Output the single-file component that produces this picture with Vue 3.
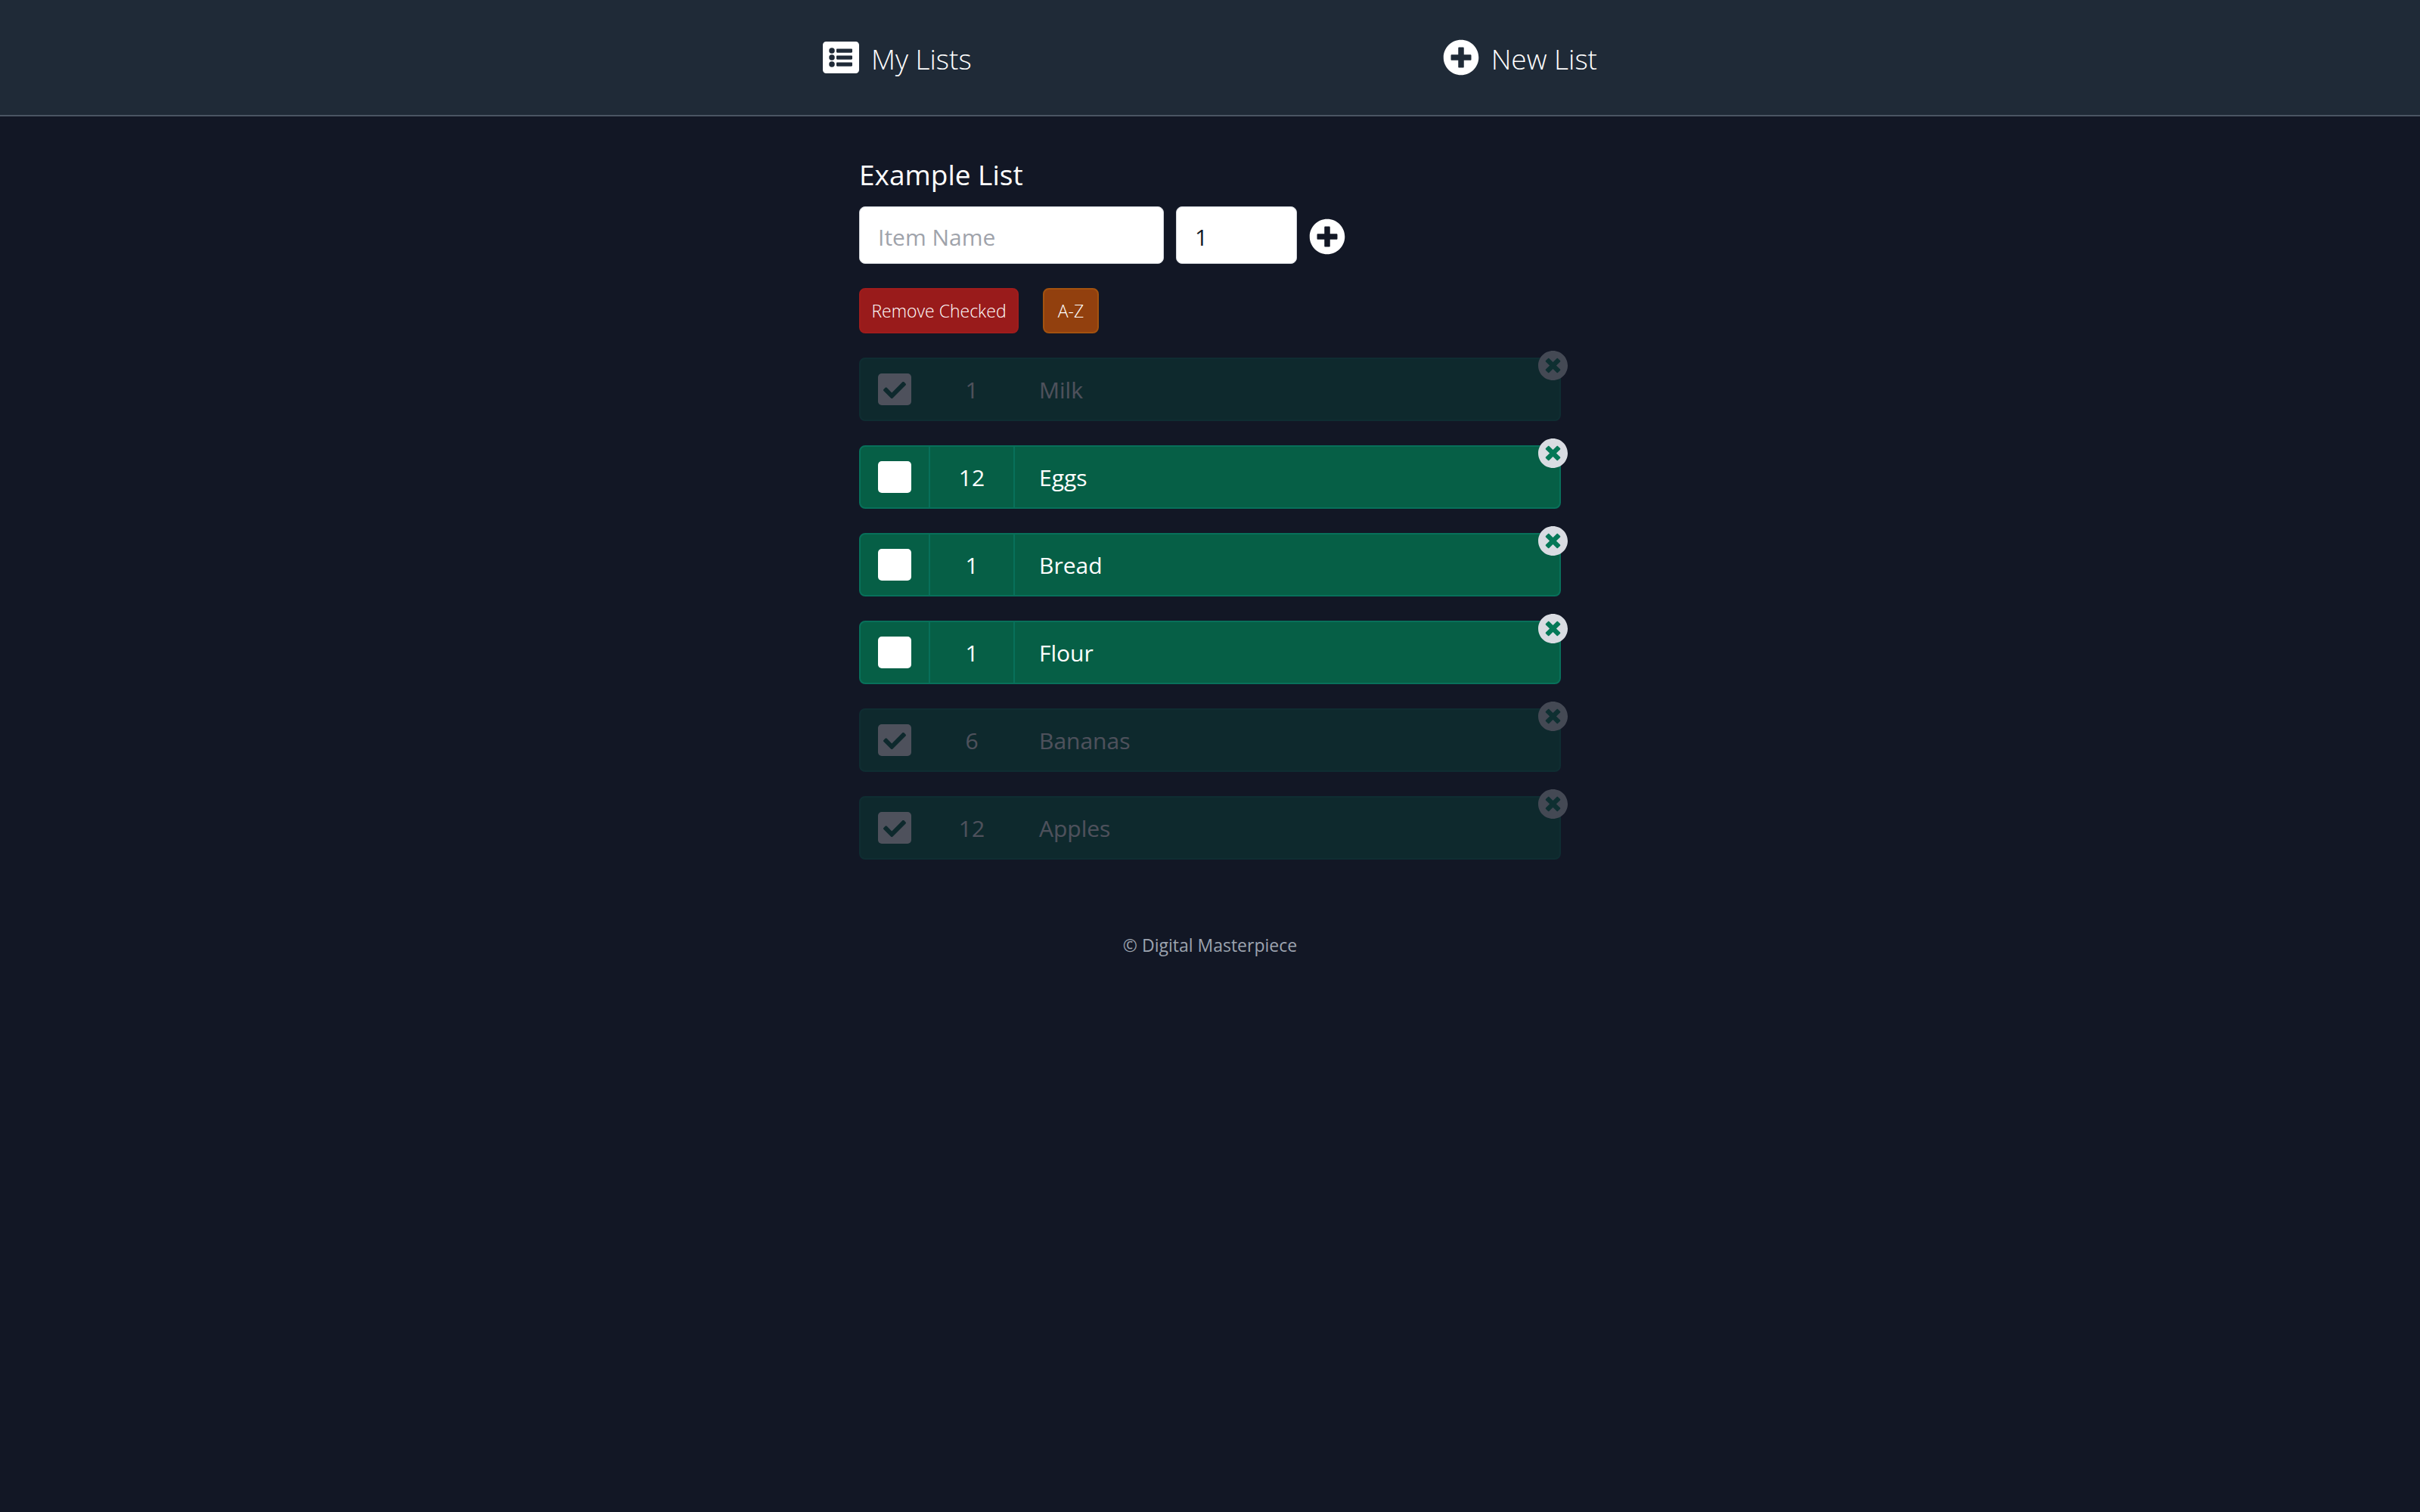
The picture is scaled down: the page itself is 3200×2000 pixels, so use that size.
<script setup>
import { ref } from 'vue'

const itemName = ref('')
const quantity = ref('1')
const items = ref([
  { id: 1, quantity: 1, name: 'Milk', done: true },
  { id: 2, quantity: 12, name: 'Eggs', done: false },
  { id: 3, quantity: 1, name: 'Bread', done: false },
  { id: 4, quantity: 1, name: 'Flour', done: false },
  { id: 5, quantity: 6, name: 'Bananas', done: true },
  { id: 6, quantity: 12, name: 'Apples', done: true },
])

function addItem() {
  if (!itemName.value.trim()) return
  items.value.push({ id: Date.now(), quantity: Number(quantity.value), name: itemName.value.trim(), done: false })
  itemName.value = ''
  quantity.value = '1'
}
function removeItem(id) {
  items.value = items.value.filter((item) => item.id !== id)
}
function removeChecked() {
  items.value = items.value.filter((item) => !item.done)
}
function sortItems() {
  items.value.sort((a, b) => a.name.localeCompare(b.name))
}
</script>

<template>
  <div class="page">
    <header class="header">
      <nav class="nav">
        <a class="nav-link" href="#lists">
          <svg class="icon" viewBox="0 0 512 512" aria-hidden="true">
            <path fill="currentColor" fill-rule="evenodd" d="M464 480H48c-26.500 0-48-21.500-48-48V80c0-26.500 21.500-48 48-48h416c26.500 0 48 21.500 48 48v352c0 26.500-21.500 48-48 48zM128 120a40 40 0 1 0 0 80 40 40 0 1 0 0-80zm0 96a40 40 0 1 0 0 80 40 40 0 1 0 0-80zm0 96a40 40 0 1 0 0 80 40 40 0 1 0 0-80zM416 176v-32c0-6.600-5.400-12-12-12H204c-6.600 0-12 5.400-12 12v32c0 6.600 5.400 12 12 12h200c6.600 0 12-5.400 12-12zm0 96v-32c0-6.600-5.400-12-12-12H204c-6.600 0-12 5.400-12 12v32c0 6.600 5.400 12 12 12h200c6.600 0 12-5.400 12-12zm0 96v-32c0-6.600-5.400-12-12-12H204c-6.600 0-12 5.400-12 12v32c0 6.600 5.400 12 12 12h200c6.600 0 12-5.400 12-12z" />
          </svg>
          <span>My Lists</span>
        </a>
        <a class="nav-link" href="#new">
          <svg class="icon" viewBox="0 0 512 512" aria-hidden="true">
            <path fill="currentColor" d="M256 8C119 8 8 119 8 256s111 248 248 248 248-111 248-248S393 8 256 8zm144 276c0 6.600-5.400 12-12 12h-92v92c0 6.600-5.400 12-12 12h-56c-6.600 0-12-5.400-12-12v-92h-92c-6.600 0-12-5.400-12-12v-56c0-6.600 5.400-12 12-12h92v-92c0-6.600 5.400-12 12-12h56c6.600 0 12 5.400 12 12v92h92c6.600 0 12 5.400 12 12v56z" />
          </svg>
          <span>New List</span>
        </a>
      </nav>
    </header>

    <main class="main">
      <h1 class="title">Example List</h1>

      <form class="add-form" @submit.prevent="addItem">
        <input v-model="itemName" class="field field-name" type="text" placeholder="Item Name" aria-label="Item Name" />
        <input v-model="quantity" class="field field-quantity" type="text" inputmode="numeric" aria-label="Quantity" />
        <button class="icon-button" type="submit" aria-label="Add item">
          <svg class="icon" viewBox="0 0 512 512" aria-hidden="true">
            <path fill="currentColor" d="M256 8C119 8 8 119 8 256s111 248 248 248 248-111 248-248S393 8 256 8zm144 276c0 6.600-5.400 12-12 12h-92v92c0 6.600-5.400 12-12 12h-56c-6.600 0-12-5.400-12-12v-92h-92c-6.600 0-12-5.400-12-12v-56c0-6.600 5.400-12 12-12h92v-92c0-6.600 5.400-12 12-12h56c6.600 0 12 5.400 12 12v92h92c6.600 0 12 5.400 12 12v56z" />
          </svg>
        </button>
      </form>

      <div class="actions">
        <button class="action action-remove" type="button" @click="removeChecked">Remove Checked</button>
        <button class="action action-sort" type="button" @click="sortItems">A-Z</button>
      </div>

      <ul class="items">
        <li v-for="item in items" :key="item.id" class="item" :class="{ done: item.done }">
          <div class="cell check-cell">
            <input :id="`item-${item.id}`" v-model="item.done" class="checkbox" type="checkbox" />
            <svg v-if="item.done" class="check" viewBox="0 32 448 448" aria-hidden="true">
              <path fill="currentColor" d="M195.300 381.900l184-184c6.200-6.200 6.200-16.400 0-22.600l-22.600-22.600c-6.200-6.200-16.400-6.200-22.600 0L184 302.700l-70.100-70c-6.200-6.200-16.400-6.200-22.600 0l-22.600 22.600c-6.200 6.200-6.200 16.400 0 22.600l104 104c6.200 6.300 16.400 6.300 22.600 0z" />
            </svg>
          </div>
          <span class="cell quantity">{{ item.quantity }}</span>
          <label class="name" :for="`item-${item.id}`">{{ item.name }}</label>
          <button class="remove" type="button" :aria-label="`Remove ${item.name}`" @click="removeItem(item.id)">
            <svg class="remove-icon" viewBox="8 8 496 496" aria-hidden="true">
              <path fill="currentColor" d="M256 8C119 8 8 119 8 256s111 248 248 248 248-111 248-248S393 8 256 8zm121.600 313.100c4.700 4.700 4.700 12.300 0 17L338 377.600c-4.700 4.700-12.300 4.700-17 0L256 312l-65.100 65.600c-4.700 4.700-12.300 4.700-17 0L134.400 338c-4.700-4.700-4.700-12.300 0-17l65.600-65-65.600-65.100c-4.700-4.700-4.700-12.300 0-17l39.600-39.600c4.700-4.700 12.300-4.700 17 0l65 65.700 65.100-65.600c4.700-4.700 12.300-4.700 17 0l39.600 39.600c4.700 4.700 4.700 12.300 0 17L312 256l65.600 65.100z" />
            </svg>
          </button>
        </li>
      </ul>
    </main>

    <footer class="footer">© Digital Masterpiece</footer>
  </div>
</template>

<style>
body {
  margin: 0;
  background: #121725;
}
</style>

<style scoped>
.page {
  min-height: 100vh;
  color: #fff;
  font-family: "Segoe UI", "Open Sans", "Noto Sans", sans-serif;
  font-size: 30px;
  line-height: 48px;
}

.page * {
  box-sizing: border-box;
}

button,
input {
  margin: 0;
  font: inherit;
}

button {
  padding: 0;
  border: 0;
  cursor: pointer;
}

.header {
  background: #1f2a37;
  border-bottom: 2px solid #4b5563;
}

.nav {
  display: flex;
  justify-content: space-between;
  max-width: 1024px;
  margin: 0 auto;
  padding: 50px 0 46px;
}

.nav-link {
  display: flex;
  align-items: center;
  gap: 16px;
  height: 56px;
  color: #fff;
  font-size: 37px;
  font-weight: 300;
  text-decoration: none;
}

.icon {
  display: block;
  flex: none;
  width: 48px;
  height: 48px;
}

.nav-link .icon {
  margin-bottom: 4px;
}

.main {
  max-width: 928px;
  margin: 0 auto;
  padding-top: 47px;
}

.title {
  margin: 0 0 12px;
  font-size: 37px;
  font-weight: 400;
  line-height: 60px;
}

.add-form {
  display: flex;
  align-items: center;
  gap: 16px;
  margin-bottom: 32px;
}

.field {
  height: 76px;
  padding: 4px 24px 0;
  color: #111827;
  background: #fff;
  border: 1px solid #d1d5db;
  border-radius: 8px;
  outline: 0;
}

.field::placeholder {
  color: #9fa3ab;
  opacity: 1;
}

.field-name {
  width: 403px;
}

.field-quantity {
  width: 160px;
}

.icon-button {
  margin-top: 4px;
  color: #fff;
  background: none;
}

.actions {
  display: flex;
  gap: 32px;
  margin-bottom: 32px;
}

.action {
  height: 60px;
  padding: 0 16px;
  color: #fff;
  border: 2px solid;
  border-radius: 8px;
  font-size: 23px;
  font-weight: 300;
}

.action-remove {
  width: 211px;
  padding: 0;
  background: #991b1b;
  border-color: #a01c1c;
}

.action-sort {
  width: 74px;
  background: #92400e;
  border-color: #a3520f;
}

.items {
  display: flex;
  flex-direction: column;
  gap: 32px;
  margin: 0;
  padding: 0;
  list-style: none;
}

.item {
  position: relative;
  display: flex;
  height: 84px;
  background: #065f46;
  border: 2px solid #08705a;
  border-radius: 8px;
}

.done {
  opacity: 0.25;
}

.cell {
  display: grid;
  place-items: center;
  border-right: 2px solid #08705a;
}

.done .cell {
  border-color: transparent;
}

.check-cell {
  width: 92px;
}

.checkbox,
.check {
  grid-area: 1 / 1;
  width: 44px;
  height: 42px;
}

.checkbox {
  appearance: none;
  background: #fff;
  border-radius: 5px;
}

.check {
  color: #065f46;
  pointer-events: none;
}

.quantity {
  width: 112px;
  padding-top: 2px;
}

.name {
  flex: 1;
  padding: 2px 0 0 32px;
  line-height: 78px;
}

.remove {
  position: absolute;
  top: -11px;
  right: -11px;
  width: 39px;
  height: 39px;
  color: #d9dce2;
  background: radial-gradient(circle, #047857 60%, transparent 60%);
}

.remove-icon {
  display: block;
  width: 100%;
  height: 100%;
}

.footer {
  padding: 89px 0 48px;
  color: #9ca3af;
  font-size: 23px;
  text-align: center;
}
</style>
